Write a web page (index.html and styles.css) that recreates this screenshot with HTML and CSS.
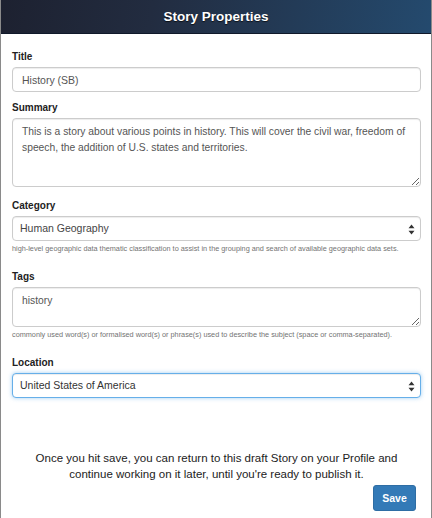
FILE: index.html
```html
<!DOCTYPE html>
<html>
<head>
<meta charset="utf-8">
<link rel="stylesheet" href="styles.css">
</head>
<body>
<div class="dialog">
  <div class="header">Story Properties</div>
  <form class="form">
    <div class="group g-title">
      <label class="label">Title</label>
      <input class="control" type="text" value="History (SB)">
    </div>
    <div class="group g-summary">
      <label class="label">Summary</label>
      <textarea class="control area area-summary">This is a story about various points in history. This will cover the civil war, freedom of speech, the addition of U.S. states and territories.</textarea>
    </div>
    <div class="group g-cat">
      <label class="label">Category</label>
      <div class="select">
        <span>Human Geography</span>
        <svg class="arrows" width="7" height="11" viewBox="0 0 7 11"><path d="M3.5 0.5 L6.5 4.2 L0.5 4.2 Z M3.5 10.5 L6.5 6.8 L0.5 6.8 Z" fill="#333"/></svg>
      </div>
      <div class="help">high-level geographic data thematic classification to assist in the grouping and search of available geographic data sets.</div>
    </div>
    <div class="group g-tags">
      <label class="label">Tags</label>
      <textarea class="control area area-tags">history</textarea>
      <div class="help">commonly used word(s) or formalised word(s) or phrase(s) used to describe the subject (space or comma-separated).</div>
    </div>
    <div class="group g-loc">
      <label class="label">Location</label>
      <div class="select focus">
        <span>United States of America</span>
        <svg class="arrows" width="7" height="11" viewBox="0 0 7 11"><path d="M3.5 0.5 L6.5 4.2 L0.5 4.2 Z M3.5 10.5 L6.5 6.8 L0.5 6.8 Z" fill="#333"/></svg>
      </div>
    </div>
    <p class="note">Once you hit save, you can return to this draft Story on your Profile and continue working on it later, until you're ready to publish it.</p>
    <div class="actions"><button type="button" class="btn">Save</button></div>
  </form>
</div>
</body>
</html>
```

FILE: styles.css
```css
* { box-sizing: border-box; }
html, body { margin: 0; padding: 0; background: #fff; }
body { font-family: "Liberation Sans", Arial, Helvetica, sans-serif; color: #333; }
.dialog {
  width: 432px;
  height: 518px;
  border-left: 1px solid #8a8a8a;
  border-right: 1px solid #8a8a8a;
  overflow: hidden;
}
.header {
  height: 34px;
  background: linear-gradient(100deg, #1d2130 0%, #222c40 35%, #244a6e 100%);
  border-bottom: 1px solid #10192a;
  color: #fff;
  font-weight: bold;
  font-size: 13.5px;
  line-height: 33px;
  text-align: center;
  text-shadow: 0 1px 1px rgba(0,0,0,.7);
}
.form { padding: 17px 10px 0 11px; margin: 0; }
.group { display: flex; flex-direction: column; }
.label {
  display: block;
  font-weight: bold;
  font-size: 10px;
  line-height: 12px;
  margin-bottom: 4px;
  color: #222;
}
.control {
  display: block;
  width: 100%;
  margin: 0;
  border: 1px solid #ccc;
  border-radius: 4px;
  background: #fff;
  font-family: "Liberation Sans", Arial, Helvetica, sans-serif;
  font-size: 10.5px;
  color: #555;
  box-shadow: inset 0 1px 1px rgba(0,0,0,.075);
  outline: none;
}
input.control { height: 25px; padding: 0 9px; }
.area { padding: 5px 4px 5px 9px; line-height: 16px; resize: vertical; font-size: 10.3px; }
.area-summary { height: 69px; }
.area-tags { height: 40px; }
.g-title { margin-bottom: 10px; }
.g-summary { margin-bottom: 13px; }
.g-cat { margin-bottom: 17px; }
.g-tags { margin-bottom: 17px; }
.select {
  position: relative;
  height: 25px;
  border: 1px solid #ccc;
  border-radius: 4px;
  background: #fff;
  font-size: 10.5px;
  color: #444;
  padding: 0 7px;
  line-height: 23px;
  box-shadow: inset 0 1px 1px rgba(0,0,0,.075);
}
.select.focus {
  border-color: #66afe9;
  box-shadow: inset 0 1px 1px rgba(0,0,0,.075), 0 0 4px rgba(102,175,233,.6);
  color: #333;
}
.arrows { position: absolute; right: 5px; top: 7px; }
.help {
  margin-top: 3px;
  font-size: 7.3px;
  line-height: 10px;
  color: #737373;
}
.note {
  margin: 52px 0 0 0;
  padding: 0 14px;
  text-align: center;
  font-size: 11.5px;
  line-height: 16px;
  color: #222;
}
.actions { display: flex; justify-content: flex-end; padding-right: 5px; margin-top: 3px; }
.btn {
  width: 43px;
  height: 26px;
  padding: 0;
  border: 1px solid #2e6da4;
  border-radius: 3px;
  background: #337ab7;
  color: #fff;
  font-family: "Liberation Sans", Arial, Helvetica, sans-serif;
  font-weight: bold;
  font-size: 10.5px;
}
```
